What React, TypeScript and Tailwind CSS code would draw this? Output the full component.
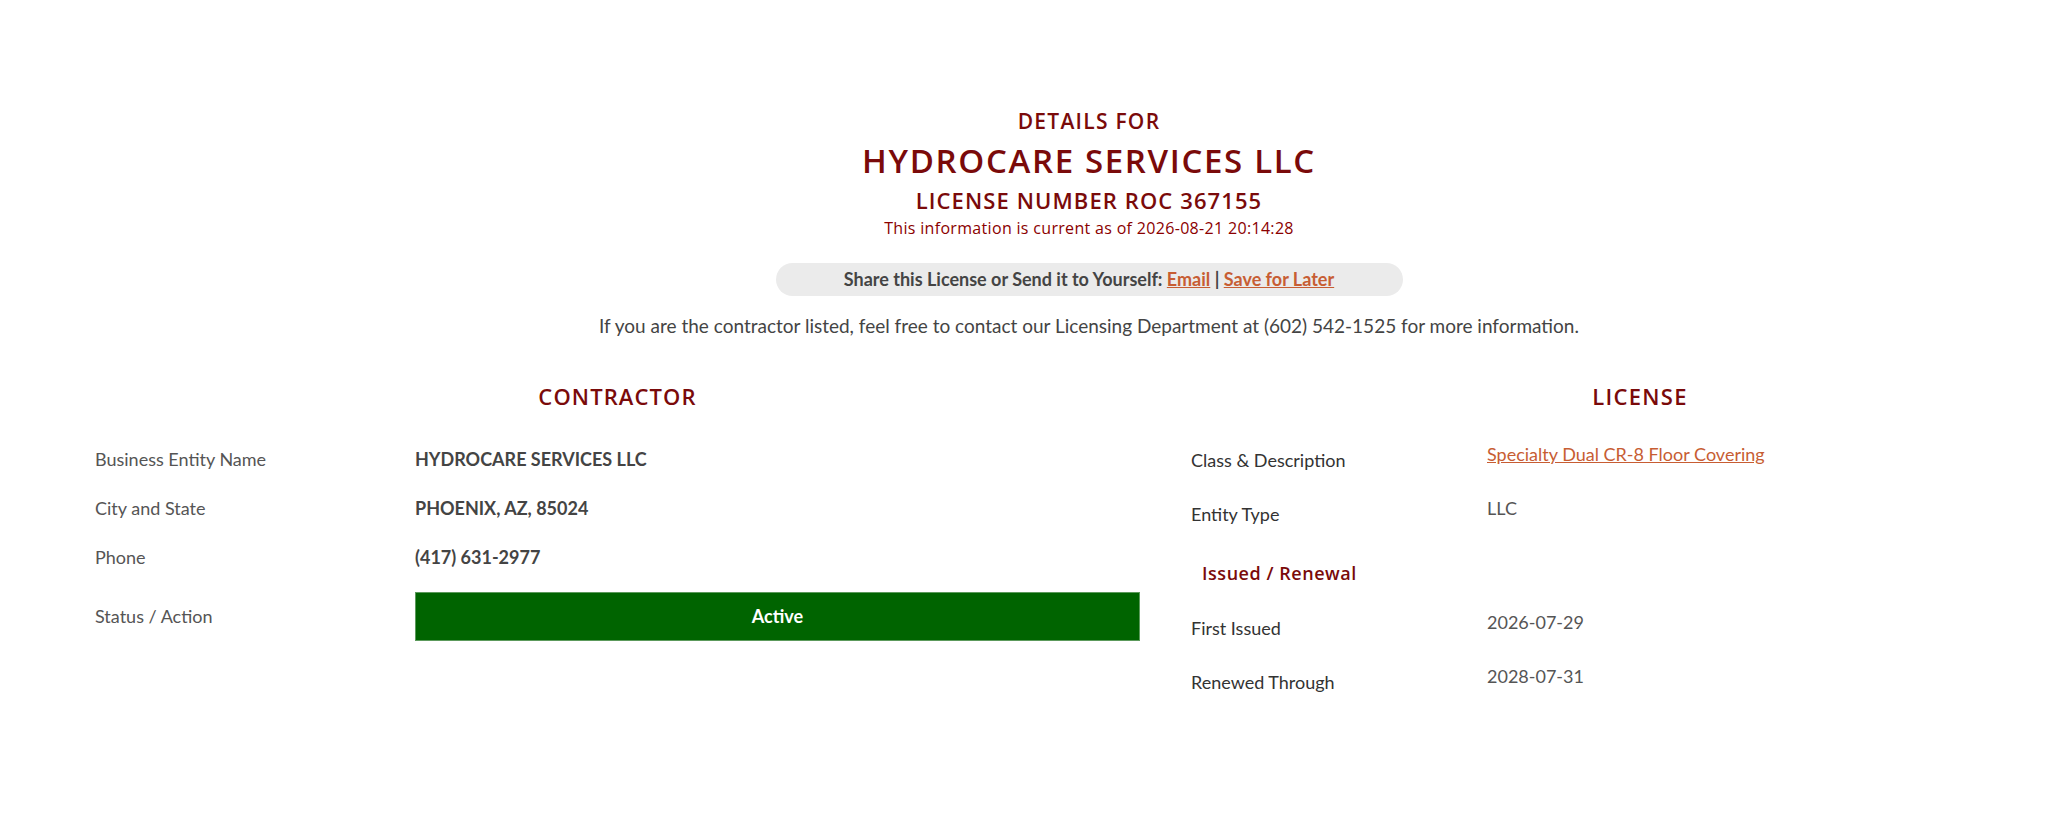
const contractorRows = [
  { label: "Business Entity Name", value: "HYDROCARE SERVICES LLC" },
  { label: "City and State", value: "PHOENIX, AZ, 85024" },
  { label: "Phone", value: "(417) 631-2977" },
];

function LicenseRow({ label, children }: { label: string; children: React.ReactNode }) {
  return (
    <div className="flex h-[54px] items-start">
      <div className="w-[312px] pl-[16px] pt-[17px] text-[18px] leading-[20px] text-[#333]">{label}</div>
      <div className="pt-[11px] text-[18px] leading-[20px] text-[#555]">{children}</div>
    </div>
  );
}

export default function App() {
  return (
    <div className="min-h-[819px] w-full overflow-hidden bg-white font-['Lato',sans-serif]">
      {/* header */}
      <div className="pl-[130px] pt-[107px] text-center">
        <h3 className="font-['Open_Sans',sans-serif] text-[21px] font-semibold leading-[28px] tracking-[0.06em] text-[#7a0a0a]">
          DETAILS FOR
        </h3>
        <h1 className="mt-[7px] font-['Open_Sans',sans-serif] text-[33px] font-semibold leading-[38px] tracking-[0.05em] text-[#7a0a0a]">
          HYDROCARE SERVICES LLC
        </h1>
        <h2 className="mt-[6px] font-['Open_Sans',sans-serif] text-[22px] font-semibold leading-[28px] tracking-[0.05em] text-[#7a0a0a]">
          LICENSE NUMBER ROC 367155
        </h2>
        <p className="mt-[4px] font-['Open_Sans',sans-serif] text-[16px] font-medium leading-[20px] tracking-[0.02em] text-[#8b0000]">
          This information is current as of 2026-08-21 20:14:28
        </p>
        <div className="mx-auto mt-[25px] flex h-[33px] w-[627px] items-center justify-center rounded-full bg-[#ebebeb] text-[18px] font-bold text-[#444]">
          <span>
            Share this License or Send it to Yourself:{" "}
            <a href="#" className="text-[#c75d33] underline">Email</a> |{" "}
            <a href="#" className="text-[#c75d33] underline">Save for Later</a>
          </span>
        </div>
        <p className="mt-[16px] text-[19px] leading-[28px] text-[#444]">
          If you are the contractor listed, feel free to contact our Licensing Department at (602) 542-1525 for more information.
        </p>
      </div>

      {/* details */}
      <div className="mt-[41px] flex">
        <div className="ml-[95px] w-[1045px]">
          <h4 className="text-center font-['Open_Sans',sans-serif] text-[22px] font-semibold leading-[30px] tracking-[0.05em] text-[#7a0a0a]">
            CONTRACTOR
          </h4>
          <div className="mt-[24px]">
            {contractorRows.map((r) => (
              <div key={r.label} className="flex h-[49px] items-center">
                <div className="w-[320px] text-[18px] text-[#555]">{r.label}</div>
                <div className="text-[18px] font-bold text-[#444]">{r.value}</div>
              </div>
            ))}
            <div className="mt-[10px] flex items-center">
              <div className="w-[320px] text-[18px] text-[#555]">Status / Action</div>
              <div className="flex h-[49px] flex-1 items-center justify-center border border-[#5c9a5c] bg-[#006400] text-[18px] font-bold text-white">
                Active
              </div>
            </div>
          </div>
        </div>

        <div className="ml-[35px] flex-1">
          <h4 className="pl-[57px] text-center font-['Open_Sans',sans-serif] text-[22px] font-semibold leading-[30px] tracking-[0.06em] text-[#7a0a0a]">
            LICENSE
          </h4>
          <div className="mt-[22px]">
            <LicenseRow label="Class & Description">
              <a href="#" className="text-[#c75d33] underline">Specialty Dual CR-8 Floor Covering</a>
            </LicenseRow>
            <LicenseRow label="Entity Type">LLC</LicenseRow>
            <div className="h-[60px] pl-[27px] pt-[20px]">
              <h5 className="font-['Open_Sans',sans-serif] text-[18px] font-semibold leading-[24px] tracking-[0.03em] text-[#7a0a0a]">
                Issued / Renewal
              </h5>
            </div>
            <LicenseRow label="First Issued">2026-07-29</LicenseRow>
            <LicenseRow label="Renewed Through">2028-07-31</LicenseRow>
          </div>
        </div>
      </div>
    </div>
  );
}
